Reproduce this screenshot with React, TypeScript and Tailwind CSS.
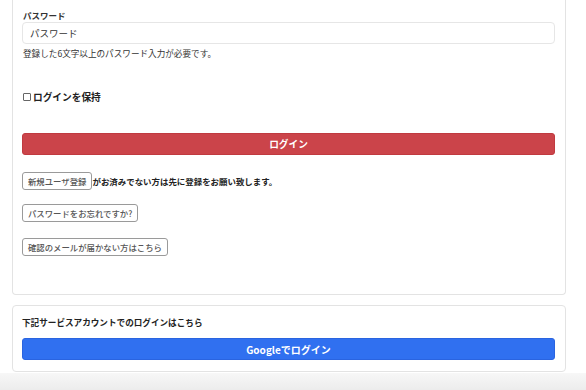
import React from 'react';

const font = { fontFamily: '"Noto Sans CJK JP", "Noto Sans", sans-serif' };

function LinkButton({ label, className = '' }: { label: string; className?: string }) {
  return (
    <button
      className={`h-[18px] rounded-[3px] border border-[#9a9a9a] bg-white px-[5px] text-[8.4px] font-medium leading-[16px] text-[#555] ${className}`}
    >
      {label}
    </button>
  );
}

export default function App() {
  return (
    <div className="flex min-h-[390px] w-[586px] flex-col bg-white text-[#222]" style={font}>
      <div className="ml-3 mr-5">
        {/* login card (top edge is scrolled off) */}
        <div className="flex flex-col rounded-b-[4px] border border-t-0 border-[#e3e3e3] pb-[38px] pl-[9px] pr-[10px]">
          <label className="mt-[8px] h-[14px] pl-[1px] text-[8.5px] font-bold leading-[14px] text-[#333]">パスワード</label>
          <div className="flex h-[22px] items-center rounded-[4px] border border-[#e6e6e6] px-[7px] text-[9.5px] text-[#333]">
            パスワード
          </div>
          <p className="mt-[3px] h-[12px] pl-[1px] text-[8.6px] leading-[12px] text-[#333]">
            登録した6文字以上のパスワード入力が必要です。
          </p>

          <div className="mt-[31px] flex h-[14px] items-center gap-[2px] pl-[1px]">
            <span className="h-[8px] w-[8px] rounded-[1px] border border-[#666] bg-white" />
            <span className="text-[9.7px] font-bold leading-[14px] text-[#222]">ログインを保持</span>
          </div>

          <button className="mt-[29px] h-[22px] w-full rounded-[3px] border border-[#c03a40] bg-[#cb444a] text-[9.7px] font-bold text-white">
            ログイン
          </button>

          <div className="mt-[17px] flex items-center">
            <LinkButton label="新規ユーザ登録" />
            <span className="text-[8.45px] font-bold text-[#222]">がお済みでない方は先に登録をお願い致します。</span>
          </div>
          <div className="mt-[14px] flex">
            <LinkButton label="パスワードをお忘れですか?" />
          </div>
          <div className="mt-[16px] flex">
            <LinkButton label="確認のメールが届かない方はこちら" />
          </div>
        </div>

        {/* external account card */}
        <div className="mt-[10px] flex flex-col rounded-[4px] border border-[#e3e3e3] pb-[11px] pl-[9px] pr-[10px] pt-[10px]">
          <p className="h-[12px] text-[8.6px] font-bold leading-[12px] text-[#222]">下記サービスアカウントでのログインはこちら</p>
          <button className="mt-[10px] h-[22px] w-full rounded-[3px] border border-[#2a64e0] bg-[#3070f0] text-[10px] font-bold text-white">
            Googleでログイン
          </button>
        </div>
      </div>

      <div className="mt-[1px] flex-1 bg-gradient-to-b from-[#f7f7f7] to-[#ececec]" />
    </div>
  );
}
